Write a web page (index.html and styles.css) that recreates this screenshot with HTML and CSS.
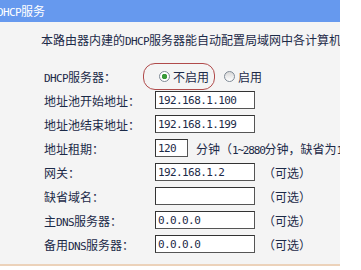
FILE: index.html
```html
<!DOCTYPE html>
<html lang="zh-CN">
<head>
  <meta charset="UTF-8">
  <title>DHCP服务</title>
  <link rel="stylesheet" href="styles.css">
</head>
<body>
  <div class="title"><span class="en">DHCP</span>服务</div>

  <div class="panel">
    <p class="intro">本路由器内建的<span class="en">DHCP</span>服务器能自动配置局域网中各计算机的<span class="en">TCP/IP</span>协议。</p>

    <div class="form">
      <div class="row">
        <span class="label"><span class="en">DHCP</span>服务器：</span>
        <div class="field">
          <span class="choice">
            <span class="radio checked"></span>不启用
          </span>
          <span class="option"><span class="radio"></span>启用</span>
        </div>
      </div>

      <div class="row">
        <span class="label">地址池开始地址：</span>
        <div class="field"><input class="box" type="text" value="192.168.1.100"></div>
      </div>

      <div class="row">
        <span class="label">地址池结束地址：</span>
        <div class="field"><input class="box" type="text" value="192.168.1.199"></div>
      </div>

      <div class="row">
        <span class="label">地址租期：</span>
        <div class="field">
          <input class="box short" type="text" value="120">
          <span class="hint">分钟（<span class="en narrow">1~2880</span>分钟，缺省为<span class="en narrow">120</span>分钟）</span>
        </div>
      </div>

      <div class="row">
        <span class="label">网关：</span>
        <div class="field"><input class="box" type="text" value="192.168.1.2"><span class="opt">（可选）</span></div>
      </div>

      <div class="row">
        <span class="label">缺省域名：</span>
        <div class="field"><input class="box" type="text" value=""><span class="opt">（可选）</span></div>
      </div>

      <div class="row">
        <span class="label">主<span class="en">DNS</span>服务器：</span>
        <div class="field"><input class="box" type="text" value="0.0.0.0"><span class="opt">（可选）</span></div>
      </div>

      <div class="row">
        <span class="label">备用<span class="en">DNS</span>服务器：</span>
        <div class="field"><input class="box" type="text" value="0.0.0.0"><span class="opt">（可选）</span></div>
      </div>
    </div>
  </div>
</body>
</html>
```

FILE: styles.css
```css
body {
  margin: 0;
  background-color: #fff;
  color: #1c2a48;
  font-family: "Noto Sans CJK SC", "DejaVu Sans", sans-serif;
  font-size: 12px;
}

.en {
  font-family: "DejaVu Sans Mono", monospace;
  font-size: 11px;
  letter-spacing: -0.6px;
}

.en.narrow {
  letter-spacing: -1.2px;
}

.title {
  width: 340px;
  height: 22px;
  line-height: 22px;
  background-color: #6699ee;
  color: #fff;
  text-indent: -3px;
  white-space: nowrap;
  overflow: hidden;
}

.panel {
  width: 340px;
  background-color: #f4f4f4;
  border-bottom: 2px solid #ecd2ba;
  padding-bottom: 8px;
  overflow: hidden;
  white-space: nowrap;
}

.intro {
  margin: 0;
  padding: 10px 0 0 41px;
  line-height: 16px;
}

.form {
  padding: 14px 0 0 44px;
}

.row {
  display: flex;
  align-items: center;
  height: 24px;
}

.label {
  flex: none;
  width: 111px;
}

.field {
  display: flex;
  align-items: center;
}

.choice {
  display: flex;
  align-items: center;
  box-sizing: border-box;
  height: 27px;
  margin-left: -12px;
  padding: 0 5px 0 15px;
  border: 1px solid #b04a4a;
  border-radius: 12px;
}

.option {
  display: flex;
  align-items: center;
  margin-left: 9px;
}

.radio {
  display: inline-block;
  box-sizing: border-box;
  width: 11px;
  height: 11px;
  margin-right: 3px;
  border: 1px solid #7f8a96;
  border-radius: 50%;
  background: linear-gradient(#d8d8d8, #fff);
}

.radio.checked {
  background: radial-gradient(circle, #3a9a3a 0 2.5px, #fff 3px);
}

.box {
  box-sizing: border-box;
  width: 100px;
  height: 18px;
  margin: 0;
  padding: 0 0 0 2px;
  border: 1px solid #555;
  border-top-color: #333;
  border-left-color: #333;
  background-color: #fff;
  color: #1c2a48;
  font-family: "DejaVu Sans Mono", monospace;
  font-size: 11px;
  letter-spacing: -0.6px;
  outline: none;
}

.box.short {
  width: 33px;
}

.hint {
  margin-left: 8px;
}

.opt {
  margin-left: 8px;
}
```
